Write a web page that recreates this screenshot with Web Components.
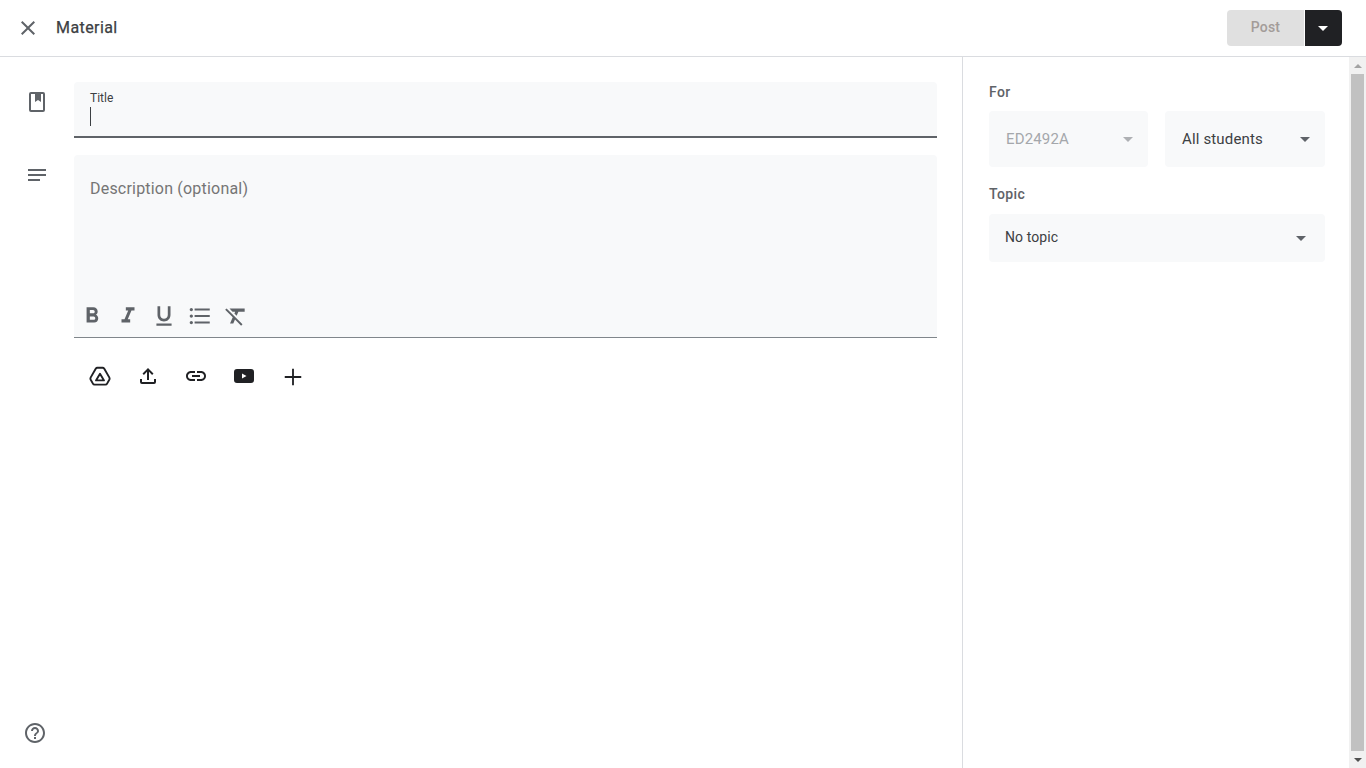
<!DOCTYPE html>
<html lang="en">
<head>
<meta charset="UTF-8" />
<title>Material</title>
<style>
  html, body { margin: 0; height: 100%; overflow: hidden; background: #fff; }
  body { font-family: Roboto, "Liberation Sans", sans-serif; color: #3c4043; }
</style>
</head>
<body>
<material-page>
  <top-bar slot="top" heading="Material"></top-bar>
  <editor-pane slot="left"></editor-pane>
  <side-panel slot="right"></side-panel>
  <fake-scrollbar slot="scroll"></fake-scrollbar>
</material-page>

<script>
const ICONS = {
  close: '<path d="M19 6.41 17.59 5 12 10.59 6.41 5 5 6.41 10.59 12 5 17.59 6.41 19 12 13.41 17.59 19 19 17.59 13.41 12z"/>',
  book: '<path fill-rule="evenodd" d="M6 2h12a2 2 0 0 1 2 2v16a2 2 0 0 1-2 2H6a2 2 0 0 1-2-2V4a2 2 0 0 1 2-2zm0 2v16h12V4h-2v8l-3-2-3 2V4H6z"/>',
  notes: '<path d="M3 6h18v2H3zM3 11h18v2H3zM3 16h12v2H3z"/>',
  bold: '<path d="M15.6 10.79c.97-.67 1.65-1.77 1.65-2.79 0-2.26-1.75-4-4-4H7v14h7.04c2.09 0 3.71-1.7 3.71-3.79 0-1.52-.86-2.82-2.15-3.42zM10 6.5h3c.83 0 1.5.67 1.5 1.5s-.67 1.5-1.5 1.5h-3v-3zm3.5 9H10v-3h3.5c.83 0 1.5.67 1.5 1.5s-.67 1.5-1.5 1.5z"/>',
  italic: '<path d="M10 4v3h2.21l-3.42 8H6v3h8v-3h-2.21l3.42-8H18V4z"/>',
  underline: '<path d="M12 17c3.31 0 6-2.69 6-6V3h-2.5v8c0 1.93-1.57 3.5-3.5 3.5S8.5 12.93 8.5 11V3H6v8c0 3.31 2.69 6 6 6zm-7 2v2h14v-2H5z"/>',
  list: '<path d="M4 10.5c-.83 0-1.5.67-1.5 1.5s.67 1.5 1.5 1.5 1.5-.67 1.5-1.5-.67-1.5-1.5-1.5zm0-6c-.83 0-1.5.67-1.5 1.5S3.17 7.5 4 7.5 5.5 6.83 5.5 6 4.83 4.5 4 4.5zm0 12c-.83 0-1.5.68-1.5 1.5s.68 1.5 1.5 1.5 1.5-.68 1.5-1.5-.67-1.5-1.5-1.5zM7 19h14v-2H7v2zm0-6h14v-2H7v2zm0-8v2h14V5H7z"/>',
  clear: '<path d="M3.27 5 2 6.27l6.97 6.97L6.5 19h3l1.57-3.66L16.73 21 18 19.73 3.55 5.27 3.27 5zM6 5v.18L8.82 8h2.4l-.72 1.68 2.1 2.1L14.21 8H20V5H6z"/>',
  drive: '<path fill="none" stroke="currentColor" stroke-width="1.900" stroke-linejoin="round" d="M9.400 3.700h5.200c.7 0 1.300.4 1.700 1l5.100 8.900c.3.6.3 1.300 0 1.900l-2.300 4.100c-.3.6-1 1-1.700 1H6.600c-.7 0-1.400-.4-1.700-1l-2.300-4.100c-.3-.6-.3-1.300 0-1.900l5.100-8.900c.4-.6 1-1 1.700-1z"/><path fill="none" stroke="currentColor" stroke-width="1.900" stroke-linejoin="round" d="M12 9.800 16 16.400H8z"/>',
  upload: '<path d="M4 15h2v3h12v-3h2v3a2 2 0 0 1-2 2H6a2 2 0 0 1-2-2zM11 16h2V7.800l3.100 3.100 1.400-1.400L12 4 6.500 9.500l1.400 1.400L11 7.800z"/>',
  link: '<path d="M3.900 12c0-1.710 1.390-3.100 3.100-3.100h4V7H7c-2.760 0-5 2.240-5 5s2.240 5 5 5h4v-1.900H7c-1.710 0-3.100-1.390-3.100-3.100zM8 13h8v-2H8v2zm9-6h-4v1.900h4c1.710 0 3.100 1.390 3.100 3.100s-1.390 3.100-3.100 3.100h-4V17h4c2.760 0 5-2.240 5-5s-2.240-5-5-5z"/>',
  youtube: '<path fill-rule="evenodd" d="M5 5h14a3 3 0 0 1 3 3v8a3 3 0 0 1-3 3H5a3 3 0 0 1-3-3V8a3 3 0 0 1 3-3zm5 4.500v5l4.500-2.500z"/>',
  add: '<path d="M21 11h-8V3h-2v8H3v2h8v8h2v-8h8z"/>',
  help: '<path d="M11 18h2v-2h-2v2zm1-16C6.480 2 2 6.480 2 12s4.480 10 10 10 10-4.480 10-10S17.520 2 12 2zm0 18c-4.410 0-8-3.590-8-8s3.590-8 8-8 8 3.590 8 8-3.590 8-8 8zm0-14c-2.210 0-4 1.790-4 4h2c0-1.100.9-2 2-2s2 .9 2 2c0 2-3 1.750-3 5h2c0-2.250 3-2.500 3-5 0-2.210-1.790-4-4-4z"/>'
};

function icon(name, size, color) {
  return `<svg width="${size}" height="${size}" viewBox="0 0 24 24" fill="currentColor" style="color:${color};display:block;flex:none">${ICONS[name]}</svg>`;
}

class MaterialPage extends HTMLElement {
  constructor() {
    super();
    this.attachShadow({ mode: 'open' });
    this.shadowRoot.innerHTML = `
      <style>
        :host { display: flex; flex-direction: column; width: 100vw; height: 100vh; }
        .body { flex: 1; display: flex; min-height: 0; }
      </style>
      <slot name="top"></slot>
      <div class="body">
        <slot name="left"></slot>
        <slot name="right"></slot>
        <slot name="scroll"></slot>
      </div>`;
  }
}

class TopBar extends HTMLElement {
  constructor() {
    super();
    this.attachShadow({ mode: 'open' });
  }
  connectedCallback() {
    this.shadowRoot.innerHTML = `
      <style>
        :host { display: flex; align-items: center; height: 56px; border-bottom: 1px solid #dadce0; padding: 0 24px 0 16px; flex: none; }
        h1 { margin: 0 0 0 16px; font: 400 16px/24px Roboto, sans-serif; -webkit-text-stroke: .25px #3c4043; color: #3c4043; letter-spacing: .42px; flex: 1; }
        .post { width: 77px; height: 36px; margin-right: 1px; background: #e0e0e0; color: #a39c99; border-radius: 4px 0 0 4px; font: 500 14px/35px Roboto, sans-serif; letter-spacing: .2px; text-align: center; }
        .more { width: 37px; height: 36px; background: #202124; border-radius: 0 4px 4px 0; display: flex; align-items: center; justify-content: center; padding-right: 1px; box-sizing: border-box; }
        .more i { border: 5px solid transparent; border-top-color: #fff; border-bottom: 0; }
      </style>
      ${icon('close', 24, '#5f6368')}
      <h1>${this.getAttribute('heading')}</h1>
      <div class="post">Post</div>
      <div class="more"><i></i></div>`;
  }
}

class EditorPane extends HTMLElement {
  constructor() {
    super();
    this.attachShadow({ mode: 'open' });
    const fmt = ['bold', 'italic', 'underline', 'list', 'clear'].map(n => `<span class="fmt">${icon(n, 26, '#5f6368')}</span>`).join('');
    const att = ['drive', 'upload', 'link', 'youtube'].map(n => `<span class="att">${icon(n, 24, '#202124')}</span>`).join('');
    this.shadowRoot.innerHTML = `
      <style>
        :host { display: flex; flex-direction: column; width: 962px; border-right: 1px solid #dadce0; flex: none; }
        .row { display: flex; }
        .rail { width: 74px; flex: none; padding-left: 25px; box-sizing: border-box; }
        .field { width: 863px; background: #f8f9fa; border-radius: 4px 4px 0 0; box-sizing: border-box; }
        .title { height: 56px; margin-top: 25px; border-bottom: 2px solid #5f6368; padding: 8px 16px 0; }
        .title label { display: block; font: 12px/16px Roboto, sans-serif; color: #3c4043; }
        .caret { display: block; width: 1px; height: 19px; background: #3c4043; margin-top: 1px; }
        .desc { height: 183px; margin-top: 17px; border-bottom: 1px solid #80868b; display: flex; flex-direction: column; justify-content: space-between; }
        .placeholder { font: 16px/24px Roboto, sans-serif; color: #757575; letter-spacing: .2px; padding: 22px 16px 0; }
        .tools { display: flex; padding: 0 0 8px; }
        .fmt { width: 36px; height: 26px; display: flex; justify-content: center; }
        .attach { display: flex; padding: 26px 0 0 2px; margin-left: 74px; }
        .att { width: 48px; height: 24px; display: flex; justify-content: center; }
        .plus { width: 48px; height: 24px; display: flex; justify-content: center; align-items: center; padding: 2px 0 0 2px; box-sizing: border-box; }
        .book { padding-top: 33px; }
        .notes { padding-top: 25px; }
        .help { margin: auto 0 23px 23px; }
      </style>
      <div class="row">
        <div class="rail book">${icon('book', 24, '#5f6368')}</div>
        <div class="field title"><label>Title</label><span class="caret"></span></div>
      </div>
      <div class="row">
        <div class="rail notes">${icon('notes', 24, '#5f6368')}</div>
        <div class="field desc">
          <div class="placeholder">Description (optional)</div>
          <div class="tools">${fmt}</div>
        </div>
      </div>
      <div class="attach">${att}<span class="plus">${icon('add', 22, '#202124')}</span></div>
      <div class="help">${icon('help', 24, '#5f6368')}</div>`;
  }
}

class SelectBox extends HTMLElement {
  constructor() {
    super();
    this.attachShadow({ mode: 'open' });
    this.shadowRoot.innerHTML = `
      <style>
        :host { display: flex; align-items: center; justify-content: space-between; box-sizing: border-box; background: #f8f9fa; border-radius: 4px; height: var(--h, 56px); padding: 0 var(--pr, 15px) 0 var(--pl, 17px); font: var(--fs, 15px)/20px Roboto, sans-serif; color: var(--c, #3c4043); letter-spacing: var(--ls, .15px); }
        span { margin-top: var(--tm, 0); }
        i { border: 5px solid transparent; border-top-color: var(--a, #5f6368); border-bottom: 0; }
      </style>
      <span><slot></slot></span><i></i>`;
  }
}

class SidePanel extends HTMLElement {
  constructor() {
    super();
    this.attachShadow({ mode: 'open' });
    this.shadowRoot.innerHTML = `
      <style>
        :host { display: block; flex: 1; padding: 25px 24px 0 26px; box-sizing: border-box; }
        h2 { margin: 0; font: 500 14px/20px Roboto, sans-serif; color: #5f6368; letter-spacing: .4px; }
        .two { display: grid; grid-template-columns: 159px 160px; gap: 17px; margin: 9px 0 17px; }
        select-box.off { --c: #a4a7ab; --a: #aeb0b3; }
        select-box.wide { --h: 48px; --pl: 16px; --pr: 19px; --fs: 14px; --ls: .1px; --tm: -2px; margin-top: 10px; }
      </style>
      <h2>For</h2>
      <div class="two">
        <select-box class="off">ED2492A</select-box>
        <select-box>All students</select-box>
      </div>
      <h2>Topic</h2>
      <select-box class="wide">No topic</select-box>`;
  }
}

class FakeScrollbar extends HTMLElement {
  constructor() {
    super();
    this.attachShadow({ mode: 'open' });
    this.shadowRoot.innerHTML = `
      <style>
        :host { display: flex; flex-direction: column; width: 17px; flex: none; background: #f1f1f1; }
        .btn { height: 17px; display: flex; align-items: center; justify-content: center; flex: none; }
        .up { border: 4px solid transparent; border-bottom-color: #a3a3a3; border-top: 0; }
        .dn { border: 4px solid transparent; border-top-color: #505050; border-bottom: 0; }
        .thumb { flex: 1; margin: 0 2px; background: #c1c1c1; }
      </style>
      <div class="btn"><i class="up"></i></div>
      <div class="thumb"></div>
      <div class="btn"><i class="dn"></i></div>`;
  }
}

customElements.define('material-page', MaterialPage);
customElements.define('top-bar', TopBar);
customElements.define('editor-pane', EditorPane);
customElements.define('select-box', SelectBox);
customElements.define('side-panel', SidePanel);
customElements.define('fake-scrollbar', FakeScrollbar);
</script>
</body>
</html>
